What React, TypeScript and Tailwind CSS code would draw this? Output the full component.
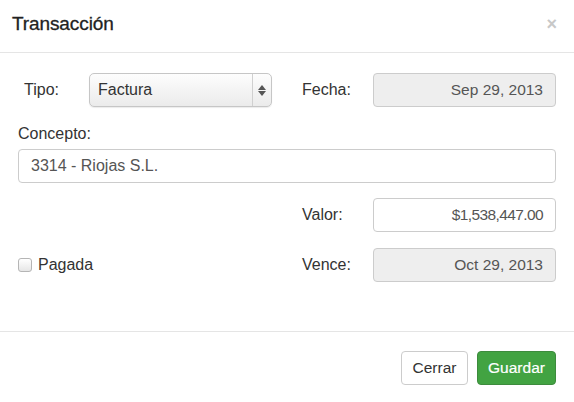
import { useState } from "react";

function Label({ children, className = "" }: { children: string; className?: string }) {
  return <span className={`text-[16px] text-[#333] ${className}`}>{children}</span>;
}

function ReadOnly({ value }: { value: string }) {
  return (
    <div className="flex h-[34px] w-[183px] items-center justify-end rounded-[4px] border border-[#ccc] bg-[#eee] pr-[12px] text-[15.5px] text-[#555]">
      {value}
    </div>
  );
}

export default function App() {
  const [paid, setPaid] = useState(false);

  return (
    <div className="h-[402px] w-[574px] bg-white font-['Liberation_Sans',Arial,sans-serif] text-[#333]">
      {/* header */}
      <div className="flex h-[53px] items-center justify-between border-b border-[#e5e5e5] pb-[4px] pl-[12px] pr-[17px]">
        <h4 className="text-[19px] font-medium tracking-[-0.1px] text-[#222] [-webkit-text-stroke:0.3px_#222]">
          Transacción
        </h4>
        <button className="text-[18px] font-bold leading-none text-[#c8c8c8]" aria-label="Cerrar">
          ×
        </button>
      </div>

      {/* body */}
      <div className="px-[18px] pb-[49px] pt-[20px]">
        <div className="flex h-[34px] items-center">
          <Label className="ml-[6px] w-[65px]">Tipo:</Label>
          <div className="flex h-[34px] w-[183px] items-center rounded-[5px] border border-[#c6c6c6] bg-gradient-to-b from-[#fdfdfd] to-[#ebebeb] shadow-[0_1px_1px_rgba(0,0,0,0.08)]">
            <span className="flex-1 pl-[8px] text-[16px] text-[#333]">Factura</span>
            <span className="flex h-full w-[19px] flex-col items-center justify-center gap-[1px] border-l border-[#d0d0d0] pr-[1px]">
              <svg width="8" height="5" viewBox="0 0 8 5">
                <path d="M4 0 L8 5 L0 5 Z" fill="#555" />
              </svg>
              <svg width="8" height="5" viewBox="0 0 8 5">
                <path d="M0 0 L8 0 L4 5 Z" fill="#555" />
              </svg>
            </span>
          </div>
          <Label className="ml-[30px] w-[71px]">Fecha:</Label>
          <ReadOnly value="Sep 29, 2013" />
        </div>

        <div className="mt-[17px] mb-[5px] leading-[20px]">
          <Label>Concepto:</Label>
        </div>
        <div className="flex h-[34px] items-center rounded-[4px] border border-[#ccc] bg-white pl-[12px] text-[16px] text-[#555]">
          3314 - Riojas S.L.
        </div>

        <div className="mt-[15px] flex h-[34px] items-center justify-end">
          <Label className="w-[71px]">Valor:</Label>
          <div className="flex h-[34px] w-[183px] items-center justify-end rounded-[4px] border border-[#ccc] bg-white pr-[12px] text-[15.5px] tracking-[-0.6px] text-[#555]">
            $1,538,447.00
          </div>
        </div>

        <div className="mt-[16px] flex h-[34px] items-center">
          <label className="flex flex-1 cursor-pointer items-center gap-[6px]" onClick={() => setPaid(!paid)}>
            <span className="h-[14px] w-[14px] rounded-[3px] border border-[#b5b5b5] bg-gradient-to-b from-[#fff] to-[#e6e6e6]">
              {paid && (
                <svg width="12" height="12" viewBox="0 0 12 12">
                  <path d="M2.5 6 L5 8.5 L9.5 3" stroke="#333" strokeWidth="1.6" fill="none" />
                </svg>
              )}
            </span>
            <Label>Pagada</Label>
          </label>
          <Label className="w-[71px]">Vence:</Label>
          <ReadOnly value="Oct 29, 2013" />
        </div>
      </div>

      {/* footer */}
      <div className="flex justify-end gap-[9px] border-t border-[#e5e5e5] px-[18px] pt-[19px]">
        <button className="h-[34px] w-[67px] rounded-[4px] border border-[#ccc] bg-white text-[15.5px] text-[#333]">
          Cerrar
        </button>
        <button className="h-[34px] w-[79px] rounded-[4px] border border-[#3d8b3d] bg-[#42a342] text-[15.5px] text-white [-webkit-text-stroke:0.2px_#fff]">
          Guardar
        </button>
      </div>
    </div>
  );
}
